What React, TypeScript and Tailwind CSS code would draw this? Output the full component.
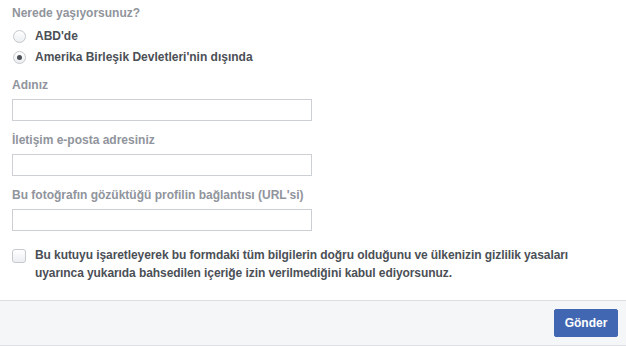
import React, { useState } from "react";

const FIELDS = [
  "Adınız",
  "İletişim e-posta adresiniz",
  "Bu fotoğrafın gözüktüğü profilin bağlantısı (URL'si)",
];

function Radio({ checked }: { checked?: boolean }) {
  return (
    <span className="flex h-[13px] w-[13px] shrink-0 items-center justify-center rounded-full border border-[#c5c8cd] bg-gradient-to-b from-[#ffffff] to-[#eceef1]">
      {checked && <span className="h-[5px] w-[5px] rounded-full bg-[#4b4f56]" />}
    </span>
  );
}

export default function App() {
  const [where, setWhere] = useState<"us" | "out">("out");
  const [agree, setAgree] = useState(false);

  return (
    <div className="flex h-[346px] w-[626px] flex-col bg-white font-['Liberation_Sans',Arial,sans-serif] text-[12px]">
      <div className="flex-1 px-3 pt-[6px]">
        <div className="h-[14px] font-bold leading-[14px] text-[#90949c]">Nerede yaşıyorsunuz?</div>

        {/* country radios */}
        <div className="mt-[6px]">
          <button
            type="button"
            onClick={() => setWhere("us")}
            className="flex h-[20px] items-center gap-[9px] pl-[1px] font-bold text-[#4b4f56]"
          >
            <Radio checked={where === "us"} />
            <span>ABD'de</span>
          </button>
          <button
            type="button"
            onClick={() => setWhere("out")}
            className="mt-[1px] flex h-[20px] items-center gap-[9px] pl-[1px] font-bold text-[#4b4f56]"
          >
            <Radio checked={where === "out"} />
            <span>Amerika Birleşik Devletleri'nin dışında</span>
          </button>
        </div>

        {FIELDS.map((label, i) => (
          <div key={label} className={i === 0 ? "mt-[11px]" : "mt-[12px]"}>
            <div className="h-[14px] font-bold leading-[14px] text-[#90949c]">{label}</div>
            <input
              type="text"
              className="mt-[7px] block h-[22px] w-[300px] border border-[#ccd0d5] bg-white px-[3px] text-[12px] outline-none"
            />
          </div>
        ))}

        {/* consent */}
        <label className="mt-[15px] flex cursor-pointer items-start gap-[9px]">
          <span className="mt-[3px] flex h-[14px] w-[14px] shrink-0 items-center justify-center rounded-[3px] border border-[#c5c8cd] bg-gradient-to-b from-[#ffffff] to-[#eceef1]">
            {agree && (
              <svg viewBox="0 0 12 12" className="h-[10px] w-[10px]" fill="none" stroke="#4b4f56" strokeWidth="2">
                <path d="M2 6.5l2.5 2.5L10 3" />
              </svg>
            )}
          </span>
          <input type="checkbox" className="hidden" checked={agree} onChange={(e) => setAgree(e.target.checked)} />
          <span className="font-bold leading-[18px] tracking-[-0.08px] text-[#4b4f56]">
            Bu kutuyu işaretleyerek bu formdaki tüm bilgilerin doğru olduğunu ve ülkenizin gizlilik yasaları
            <br />
            uyarınca yukarıda bahsedilen içeriğe izin verilmediğini kabul ediyorsunuz.
          </span>
        </label>
      </div>

      {/* footer */}
      <div className="flex h-[46px] items-start justify-end border-y border-[#dddfe2] bg-[#f5f6f7] pr-2 pt-2">
        <button
          type="button"
          className="h-[28px] w-[64px] rounded-[2px] border border-[#4267b2] bg-[#4267b2] text-[12px] font-bold text-white"
        >
          Gönder
        </button>
      </div>
    </div>
  );
}
